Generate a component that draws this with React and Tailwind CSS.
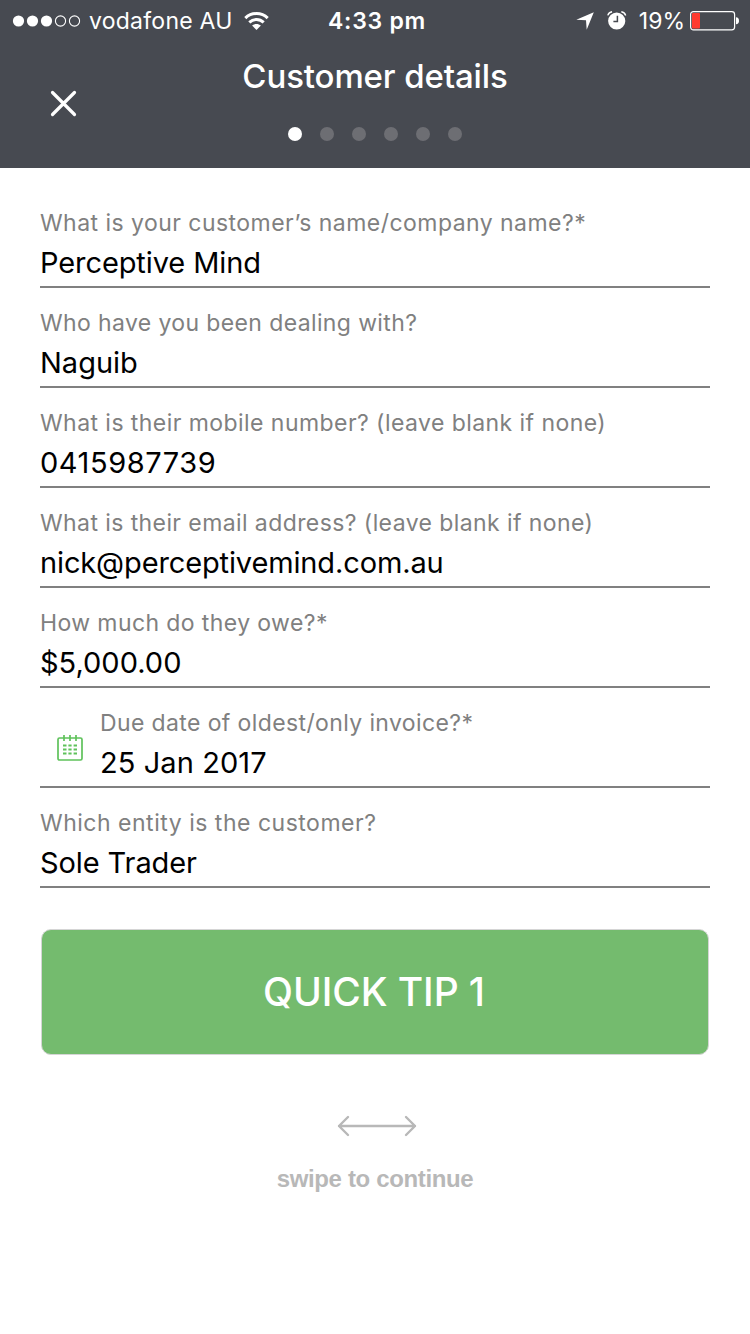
const fields = [
  { label: "What is your customer’s name/company name?*", value: "Perceptive Mind", labelTracking: "tracking-[0.46px]", valueTracking: "tracking-[-0.1px]" },
  { label: "Who have you been dealing with?", value: "Naguib", labelTracking: "tracking-[0.38px]", valueTracking: "tracking-[0px]" },
  { label: "What is their mobile number? (leave blank if none)", value: "0415987739", labelTracking: "tracking-[0.44px]", valueTracking: "tracking-[0.58px]" },
  { label: "What is their email address? (leave blank if none)", value: "nick@perceptivemind.com.au", labelTracking: "tracking-[0.41px]", valueTracking: "tracking-[-0.13px]" },
  { label: "How much do they owe?*", value: "$5,000.00", labelTracking: "tracking-[0.4px]", valueTracking: "tracking-[0px]" },
  { label: "Due date of oldest/only invoice?*", value: "25 Jan 2017", labelTracking: "tracking-[0.38px]", valueTracking: "tracking-[0.08px]", icon: true },
  { label: "Which entity is the customer?", value: "Sole Trader", labelTracking: "tracking-[0.51px]", valueTracking: "tracking-[-0.1px]" },
];

function SignalDots() {
  return (
    <svg className="h-[14px] w-[70px] shrink-0" viewBox="0 0 70 14" fill="none">
      {[0, 1, 2].map((i) => (
        <circle key={i} cx={6.5 + i * 14} cy="7" r="5.6" fill="#fff" />
      ))}
      {[3, 4].map((i) => (
        <circle key={i} cx={6.5 + i * 14} cy="7" r="5.1" stroke="#fff" strokeWidth="1.1" />
      ))}
    </svg>
  );
}

function Wifi() {
  return (
    <svg className="h-[19px] w-[25px] shrink-0" viewBox="0 0 25 19" fill="none" stroke="#fff" strokeWidth="3">
      <path d="M1.3 6.1C7.5 .1 17.5 .1 23.7 6.1" />
      <path d="M5.3 10.3C9.4 6.4 15.6 6.4 19.7 10.3" />
      <path d="M12.5 18L8.1 13.6C10.5 11.3 14.5 11.3 16.9 13.6Z" fill="#fff" stroke="none" />
    </svg>
  );
}

function Location() {
  return (
    <svg className="h-[18px] w-[18px] shrink-0" viewBox="0 0 18 18">
      <path d="M17.8 .2L10.7 17.7L10 8.3L.3 7.7Z" fill="#fff" />
    </svg>
  );
}

function Alarm() {
  return (
    <svg className="h-[20px] w-[20px] shrink-0" viewBox="0 0 20 20" fill="none">
      <circle cx="9.7" cy="10" r="8.6" fill="#fff" />
      <path d="M10.4 4.8V10.6H6.4" stroke="#474a51" strokeWidth="1.5" />
      <path d="M.8 4.4Q1.8 1.3 5.1 .8M14.3 .8Q17.6 1.3 18.7 4.4" stroke="#fff" strokeWidth="1.4" />
    </svg>
  );
}

function Battery() {
  return (
    <svg className="h-[20px] w-[50px] shrink-0" viewBox="0 0 50 20" fill="none">
      <rect x=".6" y=".6" width="44" height="18.3" rx="2.8" stroke="#fff" strokeWidth="1.2" />
      <rect x="2" y="2" width="8" height="15.5" rx="1" fill="#ff3a2f" />
      <path d="M46 6.3Q49 6.5 49 9.7T46 13.2Z" fill="#fff" />
    </svg>
  );
}

function Calendar() {
  return (
    <svg className="h-[28px] w-[28px]" viewBox="0 0 28 28" fill="none" stroke="#5fc25b" strokeWidth="1.7">
      <rect x="2" y="4" width="24" height="22" rx="1.5" />
      <path d="M8 1V7M14 1V7M20 1V7" />
      <path d="M7 11.5H10.5M12.4 11.5H15.6M17.6 11.5H21M7 15.5H10.5M12.4 15.5H15.6M17.6 15.5H21M7 19.5H10.5M12.4 19.5H15.6M17.6 19.5H21" strokeWidth="2.1" />
    </svg>
  );
}

export default function App() {
  return (
    <div className="flex h-[1334px] w-[750px] flex-col overflow-hidden bg-white font-['Inter','Liberation_Sans',sans-serif] text-black">
      <header className="flex h-[168px] flex-col bg-[#474a51] text-white">
        <div className="grid h-[41px] grid-cols-[1fr_100px_1fr] items-center pl-3 pr-[10px] pt-px">
          <div className="flex items-center">
            <SignalDots />
            <span className="ml-[7px] mr-[11px] whitespace-nowrap text-[23px] leading-10 tracking-[0.25px]">vodafone AU</span>
            <Wifi />
          </div>
          <span className="whitespace-nowrap pl-[2px] text-center text-[23px] font-semibold leading-10 tracking-[0.75px]">4:33 pm</span>
          <div className="flex items-center justify-end">
            <Location />
            <span className="ml-[13px]"><Alarm /></span>
            <span className="ml-[12px] mr-[5px] text-[23px] leading-10">19%</span>
            <Battery />
          </div>
        </div>
        <div className="grid h-[127px] grid-cols-[100px_1fr_100px]">
          <button className="flex items-start justify-end pr-[22px] pt-[49px]" aria-label="Close">
            <svg className="h-7 w-7" viewBox="0 0 28 28" stroke="#fff" strokeWidth="3.2" strokeLinecap="round">
              <path d="M2.5 2.5L24.5 24.5M24.5 2.5L2.5 24.5" />
            </svg>
          </button>
          <div className="flex flex-col items-center pt-[13px]">
            <h1 className="text-[33px] font-medium leading-[44px] tracking-[-0.12px]">Customer details</h1>
            <div className="mt-[29px] flex gap-[18px]">
              {[0, 1, 2, 3, 4, 5].map((i) => (
                <span key={i} className={i === 0 ? "size-[14px] rounded-full bg-white" : "size-[14px] rounded-full bg-[#6d6e73]"} />
              ))}
            </div>
          </div>
        </div>
      </header>
      <main className="flex flex-col px-10 pt-5">
        {fields.map((f) => (
          <div key={f.value} className="flex h-[100px] border-b-2 border-[#808080]">
            {f.icon && <div className="flex w-[60px] shrink-0 pl-4 pt-[46px]"><Calendar /></div>}
            <div className="flex flex-col whitespace-nowrap pt-[19px]">
              <span className={`text-[23px] leading-8 text-[#808080] ${f.labelTracking}`}>{f.label}</span>
              <span className={`mt-1 text-[29px] leading-10 ${f.valueTracking}`}>{f.value}</span>
            </div>
          </div>
        ))}
        <button className="mx-px mt-[41px] flex h-[126px] items-center justify-center self-stretch rounded-[10px] border border-[#d5d5d5] bg-[#74bb6e] pr-[2px] text-[39px] font-medium tracking-[-0.1px] text-white">
          QUICK TIP 1
        </button>
      </main>
      <footer className="flex flex-col items-center pt-[59px] text-[#b8b8b8]">
        <svg className="ml-1 h-6 w-20" viewBox="0 0 80 24" fill="none" stroke="currentColor" strokeWidth="2.4" strokeLinecap="round" strokeLinejoin="round">
          <path d="M2 12H78M11 3L2 12L11 21M69 3L78 12L69 21" />
        </svg>
        <span className="mt-[25px] font-['Liberation_Sans',sans-serif] text-[24px] font-bold leading-8 tracking-[-0.36px]">swipe to continue</span>
      </footer>
    </div>
  );
}
